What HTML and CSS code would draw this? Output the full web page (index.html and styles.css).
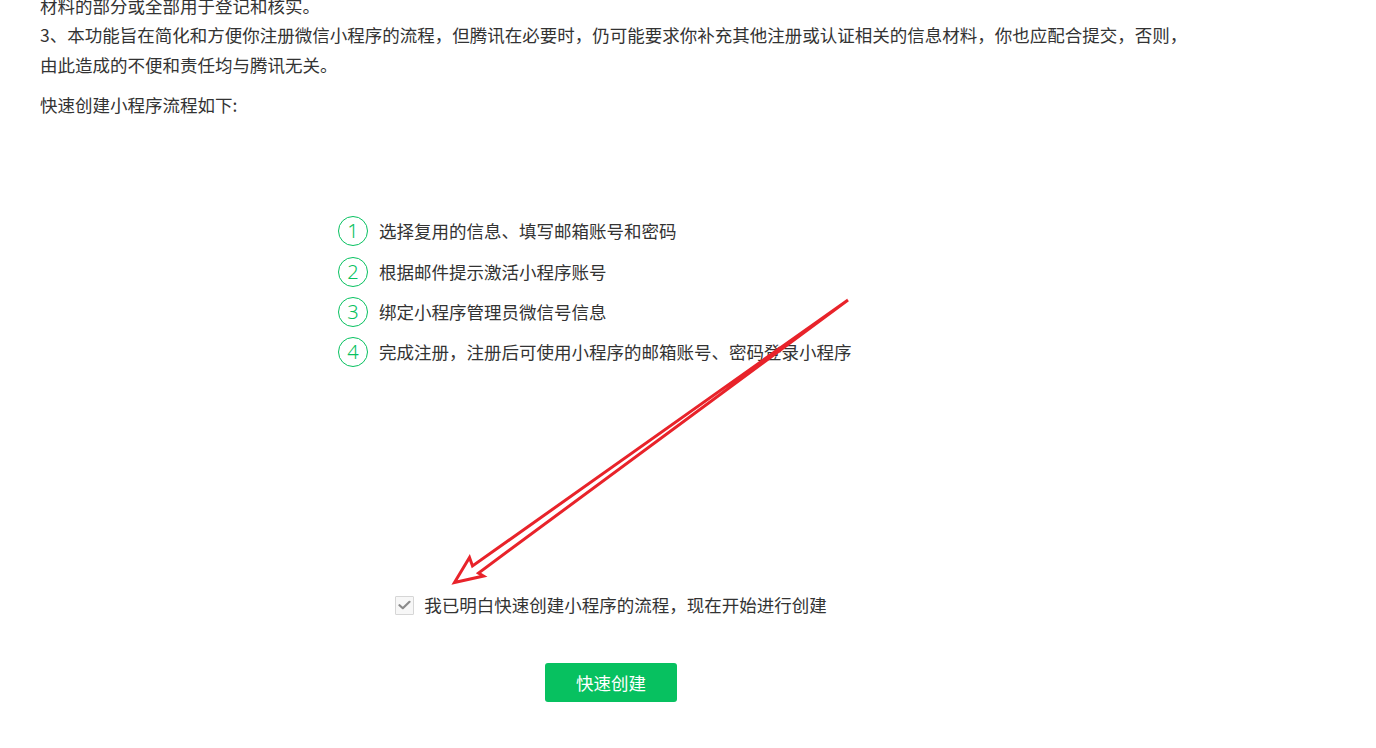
FILE: index.html
```html
<!DOCTYPE html>
<html lang="zh-CN">
<head>
<meta charset="utf-8">
<title>快速创建小程序</title>
<link rel="stylesheet" href="styles.css">
</head>
<body>
<div class="page">
  <div class="notice">
    <p class="para"><span class="line">材料的部分或全部用于登记和核实。</span><span class="line">3、本功能旨在简化和方便你注册微信小程序的流程，但腾讯在必要时，仍可能要求你补充其他注册或认证相关的信息材料，你也应配合提交，否则，</span><span class="line">由此造成的不便和责任均与腾讯无关。</span></p>
    <p class="para lead">快速创建小程序流程如下:</p>
  </div>
  <div class="steps-wrap">
    <ol class="steps">
      <li class="step"><span class="num">1</span><span class="step-text">选择复用的信息、填写邮箱账号和密码</span></li>
      <li class="step"><span class="num">2</span><span class="step-text">根据邮件提示激活小程序账号</span></li>
      <li class="step"><span class="num">3</span><span class="step-text">绑定小程序管理员微信号信息</span></li>
      <li class="step"><span class="num">4</span><span class="step-text">完成注册，注册后可使用小程序的邮箱账号、密码登录小程序</span></li>
    </ol>
  </div>
  <label class="agree">
    <span class="box"><svg width="13" height="10" viewBox="0 0 13 10"><path d="M1.5 5.2 L4.8 8.2 L11.5 1.8" fill="none" stroke="#8a8a8a" stroke-width="2.2" stroke-linecap="round" stroke-linejoin="round"/></svg></span>
    <span class="agree-text">我已明白快速创建小程序的流程，现在开始进行创建</span>
  </label>
  <div class="actions">
    <button class="btn">快速创建</button>
  </div>
</div>
<svg class="arrow" width="1376" height="748" viewBox="0 0 1376 748">
  <polygon points="848,300 472.5,566 469.5,557.5 454.5,582.5 483.5,576 478.5,573" fill="none" stroke="#e8232a" stroke-width="3" stroke-linejoin="miter"/>
</svg>
</body>
</html>
```

FILE: styles.css
```css
html, body {
  margin: 0;
  padding: 0;
  background: #fff;
}
body {
  font-family: "Noto Sans CJK SC", "Microsoft YaHei", sans-serif;
  font-size: 17.5px;
  color: #333333;
  overflow: hidden;
  width: 1376px;
  height: 748px;
  position: relative;
}
.page {
  width: 1142px;
  margin: -9px 0 0 40px;
}
.para {
  margin: 0;
  line-height: 29.3px;
}
.line {
  display: block;
  white-space: nowrap;
}
.lead {
  margin-top: 11px;
}
.steps-wrap {
  display: flex;
  justify-content: center;
  margin-top: 97px;
}
.steps {
  list-style: none;
  margin: 0;
  padding: 0;
  width: 546px;
  display: flex;
  flex-direction: column;
  gap: 10.4px;
}
.step {
  display: flex;
  align-items: center;
  height: 30px;
}
.num {
  width: 28px;
  height: 28px;
  border: 1.5px solid #07c160;
  border-radius: 50%;
  color: #07c160;
  display: flex;
  align-items: center;
  justify-content: center;
  font-family: "Noto Sans", sans-serif;
  font-size: 20px;
  font-weight: 300;
  line-height: 1;
  margin-right: 11px;
  flex: none;
}
.step-text {
  line-height: 30px;
  white-space: nowrap;
}
.agree {
  display: flex;
  justify-content: center;
  align-items: center;
  gap: 10px;
  margin-top: 228px;
  height: 20px;
}
.box {
  width: 17px;
  height: 17px;
  border: 1px solid #d6d6d6;
  background: #f7f7f7;
  display: flex;
  align-items: center;
  justify-content: center;
  border-radius: 1px;
}
.agree-text {
  line-height: 20px;
}
.actions {
  display: flex;
  justify-content: center;
  margin-top: 48px;
}
.btn {
  width: 132px;
  height: 39px;
  border: 0;
  border-radius: 3px;
  background: #07c160;
  color: #fff;
  font-family: "Noto Sans CJK SC", "Microsoft YaHei", sans-serif;
  font-size: 17.5px;
  padding: 0;
  cursor: pointer;
}
.arrow {
  position: absolute;
  left: 0;
  top: 0;
  pointer-events: none;
}
```
